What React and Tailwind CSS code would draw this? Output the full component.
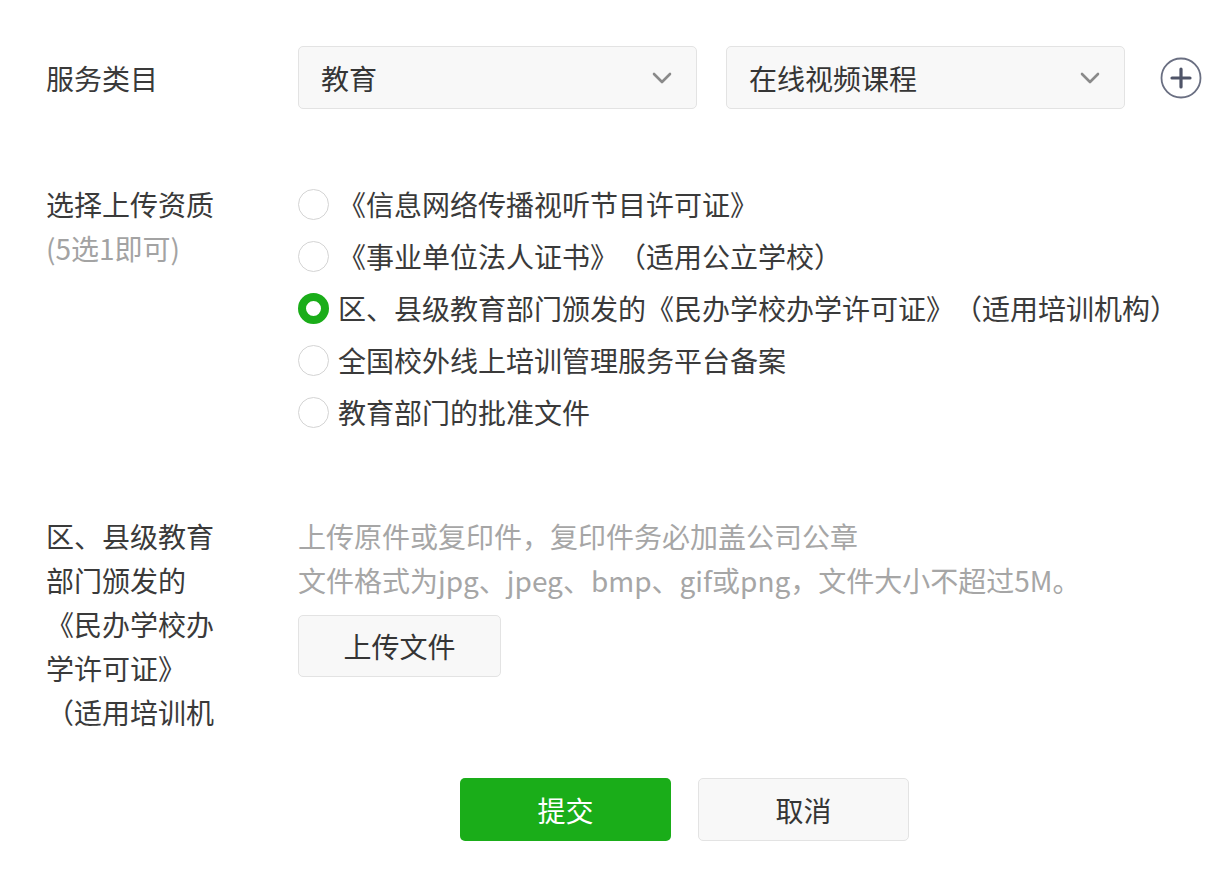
import React, { useState } from 'react';

const options = [
  '《信息网络传播视听节目许可证》',
  '《事业单位法人证书》（适用公立学校）',
  '区、县级教育部门颁发的《民办学校办学许可证》（适用培训机构）',
  '全国校外线上培训管理服务平台备案',
  '教育部门的批准文件',
];

const Chevron = () => (
  <svg width="20" height="12" viewBox="0 0 20 12" fill="none">
    <path d="M2 2l8 8 8-8" stroke="#8a8a8a" strokeWidth="2.6" strokeLinecap="round" strokeLinejoin="round" />
  </svg>
);

const Select = ({ value }) => (
  <div className="w-[399px] h-[63px] flex items-center justify-between pl-[22px] pr-[24px] bg-[#f8f8f8] border border-[#e3e3e3] rounded-[5px] text-[#353535]">
    <span>{value}</span>
    <Chevron />
  </div>
);

const Radio = ({ checked }) =>
  checked ? (
    <span className="w-[31px] h-[31px] rounded-full border-[8px] border-[#1aad19] bg-white shrink-0" />
  ) : (
    <span className="w-[31px] h-[31px] rounded-full border-[1.5px] border-[#d4d4d4] bg-white shrink-0" />
  );

export default function App() {
  const [selected, setSelected] = useState(2);

  return (
    <div
      className="w-[1230px] h-[872px] bg-white pl-[46px] pt-[46px] text-[28px] text-[#3a3a3a] [text-spacing-trim:space-all]"
      style={{ fontFamily: '"Noto Sans CJK SC", "Noto Sans", sans-serif' }}
    >
      {/* 服务类目 */}
      <div className="flex items-center h-[63px]">
        <div className="w-[252px] shrink-0">服务类目</div>
        <div className="flex items-center gap-[29px]">
          <Select value="教育" />
          <Select value="在线视频课程" />
        </div>
        <svg className="ml-[35px]" width="42" height="42" viewBox="0 0 42 42" fill="none">
          <circle cx="21" cy="21" r="19.5" stroke="#6a6f82" strokeWidth="1.8" />
          <path d="M21 12v18M12 21h18" stroke="#4f5468" strokeWidth="3.2" strokeLinecap="round" />
        </svg>
      </div>

      {/* 选择上传资质 */}
      <div className="flex items-start mt-[69px]">
        <div className="w-[252px] shrink-0 pt-[4px] leading-[44px]">
          <div>选择上传资质</div>
          <div className="text-[#a3a3a3]">(5选1即可)</div>
        </div>
        <div className="flex flex-col">
          {options.map((o, i) => (
            <label
              key={i}
              className="flex items-center gap-[9px] h-[52px] cursor-pointer whitespace-nowrap"
              onClick={() => setSelected(i)}
            >
              <Radio checked={selected === i} />
              <span>{o}</span>
            </label>
          ))}
        </div>
      </div>

      {/* 上传文件 */}
      <div className="flex items-start mt-[76px]">
        <div className="w-[252px] shrink-0">
          <div className="w-[170px] h-[220px] overflow-hidden leading-[44px]">
            {options[2]}
          </div>
        </div>
        <div className="flex flex-col items-start">
          <div className="leading-[44px] text-[#a6a6a6]">
            <div>上传原件或复印件，复印件务必加盖公司公章</div>
            <div>文件格式为jpg、jpeg、bmp、gif或png，文件大小不超过5M。</div>
          </div>
          <button className="mt-[13px] w-[203px] h-[62px] bg-[#f8f8f8] border border-[#e3e3e3] rounded-[5px] text-[#353535]">
            上传文件
          </button>
        </div>
      </div>

      {/* 操作 */}
      <div className="flex gap-[27px] pl-[414px] mt-[44px]">
        <button className="w-[211px] h-[63px] bg-[#1aad19] rounded-[5px] text-white">提交</button>
        <button className="w-[211px] h-[63px] bg-[#f8f8f8] border border-[#e3e3e3] rounded-[5px] text-[#353535]">
          取消
        </button>
      </div>
    </div>
  );
}
